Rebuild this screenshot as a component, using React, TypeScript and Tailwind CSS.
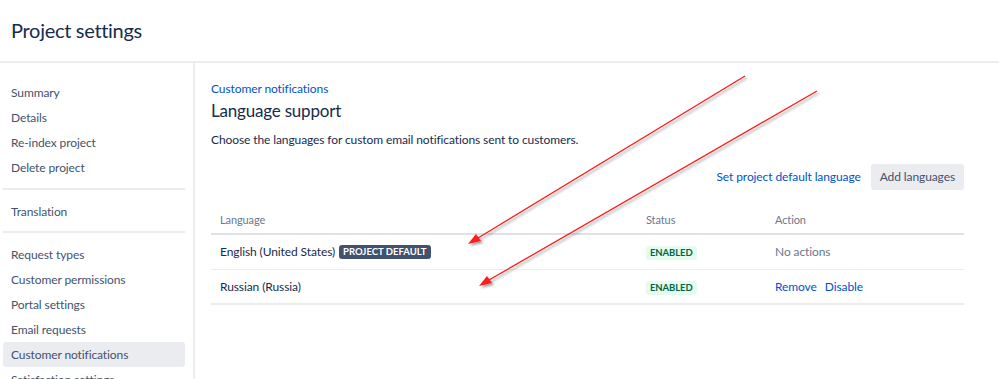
import React from "react";

const font = { fontFamily: "Lato, 'Noto Sans', sans-serif" };

function SideItem({ label, active }: { label: string; active?: boolean }) {
  return (
    <div
      className={`h-[25px] flex items-center pl-[8px] rounded-[3px] text-[12px] tracking-[-0.1px] text-[#42526e] ${
        active ? "bg-[#ebecf0]" : ""
      }`}
    >
      {label}
    </div>
  );
}

function Sep({ tight }: { tight?: boolean }) {
  return <div className={`h-[2px] bg-[#ebecf0] mb-[9px] ${tight ? "mt-[7px]" : "mt-[8px]"}`} />;
}

function Enabled() {
  return (
    <span className="bg-[#e3fcef] text-[#006644] text-[9.5px] font-bold rounded-[3px] px-[4px] h-[14px] leading-[14px] inline-block">
      ENABLED
    </span>
  );
}

export default function App() {
  return (
    <div className="relative w-[999px] h-[379px] overflow-hidden bg-white" style={font}>
      <div className="h-[63px] border-b-2 border-[#ebecf0] flex items-center pl-[11px]">
        <h1 className="text-[20px] tracking-[-0.3px] text-[#172b4d] leading-none pb-[1px]">Project settings</h1>
      </div>
      <div className="flex h-[316px]">
        <div className="w-[195px] shrink-0 border-r-2 border-[#ebecf0] pt-[17px] pl-[3px] pr-[8px]">
          <SideItem label="Summary" />
          <SideItem label="Details" />
          <SideItem label="Re-index project" />
          <SideItem label="Delete project" />
          <Sep />
          <SideItem label="Translation" />
          <Sep tight />
          <SideItem label="Request types" />
          <SideItem label="Customer permissions" />
          <SideItem label="Portal settings" />
          <SideItem label="Email requests" />
          <SideItem label="Customer notifications" active />
          <SideItem label="Satisfaction settings" />
        </div>
        <div className="flex-1 pl-[16px] pt-[18px] pr-[35px] tracking-[-0.1px]">
          <div className="text-[12px] text-[#0052cc] leading-[16px]">Customer notifications</div>
          <div className="text-[17px] text-[#172b4d] leading-[24px] mt-[2px] tracking-[-0.2px]">Language support</div>
          <div className="text-[12px] text-[#172b4d] leading-[16px] mt-[9px]">
            Choose the languages for custom email notifications sent to customers.
          </div>
          <div className="flex justify-end items-center mt-[16px] gap-[10px]">
            <span className="text-[12px] text-[#0052cc]">Set project default language</span>
            <span className="h-[26px] px-[9px] flex items-center rounded-[3px] bg-[#ebecf0] text-[12px] text-[#42526e]">
              Add languages
            </span>
          </div>
          <div className="mt-[18px]">
            <div className="flex h-[27px] items-center border-b-2 border-[#dfe1e6] text-[11px] text-[#6b778c]">
              <div className="w-[435px] pl-[9px]">Language</div>
              <div className="w-[129px]">Status</div>
              <div>Action</div>
            </div>
            <div className="flex h-[35px] items-center border-b border-[#ebecf0] text-[12px] text-[#172b4d]">
              <div className="w-[435px] pl-[9px] flex items-center gap-[4px]">
                English (United States)
                <span className="bg-[#42526e] text-white text-[9.5px] font-bold rounded-[3px] px-[4px] h-[14px] leading-[14px] tracking-normal">
                  PROJECT DEFAULT
                </span>
              </div>
              <div className="w-[129px]">
                <Enabled />
              </div>
              <div className="text-[#6b778c]">No actions</div>
            </div>
            <div className="flex h-[35px] items-center border-b-2 border-[#ebecf0] text-[12px] text-[#172b4d]">
              <div className="w-[435px] pl-[9px]">Russian (Russia)</div>
              <div className="w-[129px]">
                <Enabled />
              </div>
              <div className="flex gap-[8px] text-[#0052cc]">
                <span>Remove</span>
                <span>Disable</span>
              </div>
            </div>
          </div>
        </div>
      </div>
      <svg className="absolute inset-0 pointer-events-none" width="999" height="379">
        <defs>
          <filter id="sh" x="-10%" y="-10%" width="130%" height="130%">
            <feDropShadow dx="2" dy="2" stdDeviation="1.2" floodColor="#000" floodOpacity="0.35" />
          </filter>
        </defs>
        <g filter="url(#sh)">
          <line x1="745" y1="76" x2="478" y2="238" stroke="#ff1a1a" strokeWidth="1.3" />
          <polygon points="468,244 476,234 481,241" fill="#ff1a1a" />
          <line x1="817" y1="91" x2="489" y2="280" stroke="#ff1a1a" strokeWidth="1.3" />
          <polygon points="479,286 487,276 492,283" fill="#ff1a1a" />
        </g>
      </svg>
    </div>
  );
}
